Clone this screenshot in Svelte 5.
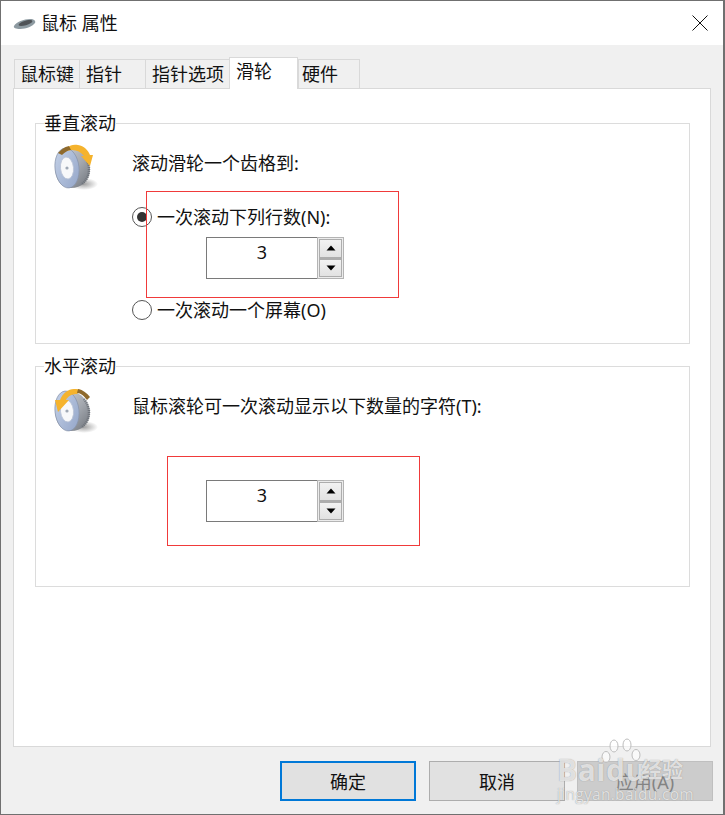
<script>
  const tabs = [
    { label: '鼠标键', width: 65, pad: 5 },
    { label: '指针', width: 66, pad: 6 },
    { label: '指针选项', width: 84, pad: 6 },
    { label: '滑轮', width: 69, pad: 6, active: true },
    { label: '硬件', width: 62, pad: 3 }
  ];
</script>

{#snippet spin()}
  <div class="spin">
    <div class="spin-value">3</div>
    <div class="spin-buttons">
      <div class="spin-btn"><svg width="10" height="6" viewBox="0 0 10 6"><path d="M5 0.5 9.5 5.5H0.5Z" fill="#000" /></svg></div>
      <div class="spin-btn"><svg width="10" height="6" viewBox="0 0 10 6"><path d="M0.5 0.5H9.5L5 5.5Z" fill="#000" /></svg></div>
    </div>
  </div>
{/snippet}

{#snippet wheel(flip)}
  <svg class="wheel" width="46" height="54" viewBox="0 0 46 54">
    <defs>
      <radialGradient id={flip ? 'sh2' : 'sh1'} cx="0.5" cy="0.5" r="0.5">
        <stop offset="0" stop-color="#8a8a8a" stop-opacity="0.8" />
        <stop offset="1" stop-color="#8a8a8a" stop-opacity="0" />
      </radialGradient>
      <linearGradient id={flip ? 'tr2' : 'tr1'} x1="0" y1="0" x2="1" y2="1">
        <stop offset="0" stop-color="#d3d6db" />
        <stop offset="0.55" stop-color="#a4a8af" />
        <stop offset="1" stop-color="#6d7279" />
      </linearGradient>
      <linearGradient id={flip ? 'fa2' : 'fa1'} x1="0" y1="0" x2="1" y2="1">
        <stop offset="0" stop-color="#c5d2e8" />
        <stop offset="1" stop-color="#93a5c8" />
      </linearGradient>
    </defs>
    <ellipse cx="30" cy="43" rx="14" ry="6" fill="url(#{flip ? 'sh2' : 'sh1'})" />
    <path d="M13 7C24 6 35 15 36 28 36 40 27 47 17 47 7 47 1 38 1 27 1 16 6 8 13 7Z" fill="url(#{flip ? 'tr2' : 'tr1'})" />
    <path d="M30 15C33 19 35 24 35 28 35 34 33 39 28 43" fill="none" stroke="#6f747b" stroke-width="2.5" stroke-dasharray="1 1" />
    <ellipse cx="13" cy="27" rx="12" ry="20" fill="url(#{flip ? 'fa2' : 'fa1'})" stroke="#8793aa" stroke-width="0.7" transform="rotate(-6 13 27)" />
    <ellipse cx="13" cy="27" rx="6.5" ry="11" fill="#f7f8fa" stroke="#b9c3d6" stroke-width="0.8" transform="rotate(-6 13 27)" />
    <circle cx="13" cy="27" r="1.6" fill="#9fa8b5" />
    {#if flip}
      <path d="M4 28 1 16 6 16C9 9 14 5 20 5 23 5 25 5 27 6L23 10C18 10 14 12 12 16L15 16Z" fill="#f5b32d" />
      <path d="M24 5C29 6 33 9 36 13L33 16C30 12 27 9 23 9Z" fill="#8f6a2c" />
    {:else}
      <path d="M13 7C16 4 20 3 24 4 30 5 34 9 36 14L39 14 36 25 27 15 30 15C27 11 23 9 18 9 16 9 14 10 12 10Z" fill="#f5b32d" />
      <path d="M4 12C7 9 10 6 15 5L17 9C14 9 11 11 8 14Z" fill="#8f6a2c" />
    {/if}
  </svg>
{/snippet}

<div class="window">
  <header class="title">
    <svg class="mouse" width="23" height="12" viewBox="0 0 23 12">
      <path d="M1 8C3 4 11 1 17 1 21 1 23 3 22 5 20 8 13 11 7 11 3 11 0 10 1 8Z" fill="#8d9aa1" />
      <path d="M6 6C8 4 13 2 17 2 20 2 20 4 18 5 15 7 11 8 8 8 6 8 5 7 6 6Z" fill="#4f5357" />
    </svg>
    <span>鼠标 属性</span>
    <svg class="close" width="16" height="16" viewBox="0 0 16 16"><path d="M0.5 0.5 15.5 15.5M15.5 0.5 0.5 15.5" stroke="#111" stroke-width="1" fill="none" /></svg>
  </header>

  <div class="tabs">
    {#each tabs as tab}
      <div class="tab" class:active={tab.active} style="width:{tab.width}px;padding-left:{tab.pad}px">{tab.label}</div>
    {/each}
  </div>

  <main class="panel">
    <section class="group">
      <div class="legend">垂直滚动</div>
      <div class="group-body">
        {@render wheel(false)}
        <div class="col">
          <p class="lead">滚动滑轮一个齿格到:</p>
          <label class="radio first"><span class="dot on"></span>一次滚动下列行数(N):</label>
          {@render spin()}
          <label class="radio second"><span class="dot"></span>一次滚动一个屏幕(O)</label>
        </div>
      </div>
    </section>

    <section class="group two">
      <div class="legend">水平滚动</div>
      <div class="group-body">
        {@render wheel(true)}
        <div class="col">
          <p class="lead">鼠标滚轮可一次滚动显示以下数量的字符(T):</p>
          <div class="spin-gap">{@render spin()}</div>
        </div>
      </div>
    </section>
  </main>

  <footer class="footer">
    <button class="btn default">确定</button>
    <button class="btn">取消</button>
    <button class="btn disabled">应用(A)</button>
  </footer>

  <div class="mark one"></div>
  <div class="mark two"></div>

  <div class="wm" aria-hidden="true">
    <svg class="paw" width="42" height="28" viewBox="0 0 42 28">
      <g stroke="#bdbdbd" stroke-width="1" fill="#fff" fill-opacity="0.6">
        <ellipse cx="6" cy="19" rx="4" ry="5.5" />
        <ellipse cx="14" cy="8" rx="4" ry="6" />
        <ellipse cx="27" cy="7" rx="4" ry="6" />
        <ellipse cx="36" cy="17" rx="4" ry="5.5" />
      </g>
    </svg>
    <span class="wm-brand">Baidu</span>
    <span class="wm-cn">经验</span>
    <span class="wm-url">jingyan.baidu.com</span>
  </div>
</div>

<style>
  :global(body) {
    margin: 0;
    background: #fff;
  }
  .window {
    position: relative;
    box-sizing: border-box;
    width: 725px;
    height: 815px;
    border: 1px solid #707070;
    border-right-width: 2px;
    background: #f0f0f0;
    display: flex;
    flex-direction: column;
    font-family: "Noto Sans", "Noto Sans CJK SC", sans-serif;
    font-size: 18px;
    color: #111;
    overflow: hidden;
  }
  .title {
    height: 44px;
    flex: none;
    background: #fff;
    display: flex;
    align-items: center;
    padding: 0 15px 0 12px;
    box-sizing: border-box;
  }
  .title span { margin-left: 5px; line-height: 24px; }
  .mouse { flex: none; margin-top: 1px; }
  .close { margin-left: auto; }
  .tabs {
    display: flex;
    align-items: flex-end;
    height: 31px;
    margin: 12px 0 0 13px;
    flex: none;
    position: relative;
    z-index: 1;
  }
  .tab {
    box-sizing: border-box;
    height: 29px;
    border: 1px solid #d9d9d9;
    border-right: 0;
    border-bottom: 0;
    line-height: 28px;
    background: #f0f0f0;
    white-space: nowrap;
  }
  .tab:last-child { border-right: 1px solid #d9d9d9; }
  .tab.active {
    height: 32px;
    margin-bottom: -1px;
    background: #fff;
    border-right: 1px solid #d9d9d9;
    line-height: 26px;
  }
  .panel {
    box-sizing: border-box;
    width: 698px;
    height: 659px;
    margin-left: 12px;
    flex: none;
    background: #fff;
    border: 1px solid #d9d9d9;
    padding: 34px 20px 0 21px;
  }
  .group {
    box-sizing: border-box;
    height: 221px;
    border: 1px solid #dcdcdc;
    padding-left: 8px;
  }
  .group.two { margin-top: 22px; }
  .legend {
    width: fit-content;
    margin-top: -13px;
    height: 24px;
    line-height: 24px;
    background: #fff;
  }
  .group-body {
    display: flex;
  }
  .wheel {
    flex: none;
    margin: 6px 0 0 10px;
  }
  .col {
    margin-left: 32px;
    display: flex;
    flex-direction: column;
  }
  .lead {
    margin: 16px 0 0;
    line-height: 24px;
    white-space: nowrap;
  }
  .radio {
    display: flex;
    align-items: center;
    line-height: 24px;
    white-space: nowrap;
  }
  .radio.first { margin-top: 30px; }
  .radio.second { margin-top: 19px; }
  .dot {
    box-sizing: border-box;
    width: 20px;
    height: 20px;
    border: 1px solid #555;
    border-radius: 50%;
    margin-right: 5px;
    flex: none;
    display: flex;
    align-items: center;
    justify-content: center;
  }
  .dot.on::after {
    content: "";
    width: 10px;
    height: 10px;
    border-radius: 50%;
    background: #333;
  }
  .spin {
    box-sizing: border-box;
    display: flex;
    width: 138px;
    height: 42px;
    margin: 8px 0 0 74px;
  }
  .spin-gap { margin-top: 62px; }
  .spin-gap .spin { margin-top: 0; }
  .spin-value {
    box-sizing: border-box;
    width: 111px;
    border: 1px solid #7a7a7a;
    border-right: 0;
    text-align: center;
    line-height: 28px;
    background: #fff;
  }
  .spin-buttons {
    box-sizing: border-box;
    width: 27px;
    border: 1px solid #b4b4b4;
    padding: 1px;
    display: flex;
    flex-direction: column;
    background: #ececec;
  }
  .spin-btn {
    flex: 1;
    box-sizing: border-box;
    border: 1px solid #adadad;
    background: linear-gradient(#f2f2f2, #e2e2e2);
    display: flex;
    align-items: center;
    justify-content: center;
  }
  .spin-btn + .spin-btn { border-top-width: 2px; }
  .footer {
    display: flex;
    gap: 13px;
    padding: 14px 0 0 279px;
  }
  .btn {
    box-sizing: border-box;
    width: 136px;
    height: 40px;
    padding: 0;
    margin: 0;
    font: inherit;
    color: #111;
    background: #e1e1e1;
    border: 1px solid #adadad;
    border-radius: 0;
  }
  .btn.default { border: 2px solid #0078d7; }
  .btn.disabled {
    margin-left: -1px;
    background: #cccccc;
    border-color: #bfbfbf;
    color: #838383;
  }
  .mark {
    position: absolute;
    box-sizing: border-box;
    border: 1px solid #f03a3a;
    pointer-events: none;
  }
  .mark.one { left: 145px; top: 190px; width: 253px; height: 107px; }
  .mark.two { left: 166px; top: 455px; width: 253px; height: 90px; }
  .wm {
    position: absolute;
    left: 555px;
    top: 736px;
    width: 140px;
    height: 66px;
    color: rgba(255, 255, 255, 0.72);
    font-family: "Open Sans", "Noto Sans CJK SC", sans-serif;
    text-shadow: 0 0 1px rgba(120, 120, 120, 0.8);
  }
  .paw { position: absolute; left: 44px; top: 1px; }
  .wm-brand {
    position: absolute;
    left: 1px;
    top: 16px;
    font-size: 30px;
    line-height: 34px;
    font-weight: 700;
    letter-spacing: 0.5px;
  }
  .wm-cn {
    position: absolute;
    left: 85px;
    top: 20px;
    font-size: 21px;
    line-height: 24px;
    font-weight: 700;
  }
  .wm-url {
    position: absolute;
    left: 1px;
    top: 47px;
    font-size: 15.5px;
    line-height: 20px;
    letter-spacing: 0.3px;
  }
</style>
